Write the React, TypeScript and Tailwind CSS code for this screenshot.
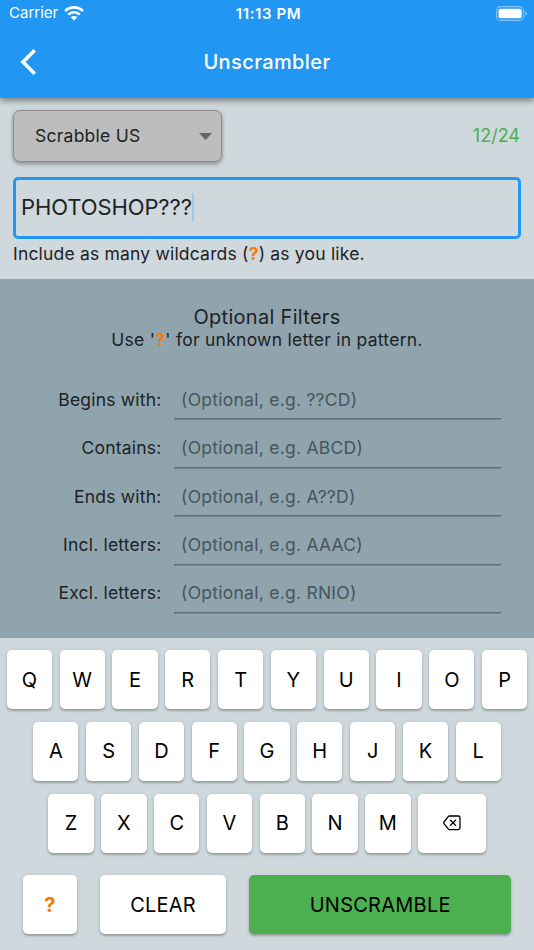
import { useState } from "react"
import type { ReactNode } from "react"
import clsx from "clsx"

const FILTERS = [
    { label: "Begins with:", hint: "(Optional, e.g. ??CD)" },
    { label: "Contains:", hint: "(Optional, e.g. ABCD)" },
    { label: "Ends with:", hint: "(Optional, e.g. A??D)" },
    { label: "Incl. letters:", hint: "(Optional, e.g. AAAC)" },
    { label: "Excl. letters:", hint: "(Optional, e.g. RNIO)" },
]

const MAX_LETTERS = 24

function Wildcard() {
    return <span className="font-bold text-[#f57c00]">?</span>
}

function WifiIcon() {
    return (
        <svg width="20" height="15" viewBox="0 0 20 15" fill="none" stroke="white" strokeWidth="2.6">
            <path d="M1.1 5C6 .2 14 .2 18.9 5" />
            <path d="M4.2 8.6C7.5 5.5 12.5 5.5 15.8 8.6" />
            <path d="M10 14.5 6.7 11.2C8.6 9.6 11.4 9.6 13.3 11.2Z" fill="white" stroke="none" />
        </svg>
    )
}

function BatteryIcon() {
    return (
        <svg width="32" height="15" viewBox="0 0 32 15" fill="none">
            <rect x=".6" y=".6" width="27" height="13.8" rx="4" stroke="white" strokeOpacity=".45" strokeWidth="1.1" />
            <rect x="2.5" y="2.8" width="23.2" height="9.4" rx="1.6" fill="white" />
            <path d="M29.4 5.2C31.4 6 31.4 9 29.4 9.8Z" fill="white" fillOpacity=".5" />
        </svg>
    )
}

function BackspaceIcon() {
    return (
        <svg width="18" height="16" viewBox="0 0 18 16" fill="none" stroke="black" strokeWidth="1.3" strokeLinecap="round" strokeLinejoin="round">
            <path d="M6.6 1H15.2Q17 1 17 2.8V12.8Q17 14.6 15.2 14.6H6.6Q5.8 14.6 5.2 13.9L1 8.6Q.5 7.8 1 7L5.2 1.7Q5.8 1 6.6 1Z" />
            <path d="M7.4 5.2 12.6 10.4M12.6 5.2 7.4 10.4" />
        </svg>
    )
}

function Key({ children, className, label, onClick }: { children: ReactNode, className?: string, label?: string, onClick: () => void }) {
    return (
        <button
            onClick={onClick}
            aria-label={label}
            className={clsx(
                "flex h-[59px] items-center justify-center rounded-[5px] text-[20px] text-black shadow-[0_2px_2px_rgba(0,0,0,0.2),0_1px_4px_rgba(0,0,0,0.12)]",
                className ?? "w-[45.3px] bg-white"
            )}
        >
            {children}
        </button>
    )
}

export default function App() {
    const [letters, setLetters] = useState("PHOTOSHOP???");

    function type(letter: string) {
        setLetters((prev) => (prev.length < MAX_LETTERS ? prev + letter : prev));
    }

    function renderKeys(row: string) {
        return row.split("").map((letter) => (
            <Key key={letter} onClick={() => type(letter)}>{letter}</Key>
        ));
    }

    return (
        <div className="flex h-[950px] w-[534px] flex-col overflow-hidden bg-[#cfd8dc] font-[Inter,sans-serif] text-[#1c2225]">
            {/* ── Header ── */}
            <header className="relative z-10 h-[98px] shrink-0 bg-[#2196f3] text-white shadow-[0_3px_6px_rgba(0,0,0,0.4)]">
                <div className="grid h-[27px] grid-cols-3 items-center pr-[6px] pl-[9px]">
                    <div className="flex items-center gap-[6px] text-[15px]">
                        <span>Carrier</span>
                        <WifiIcon />
                    </div>
                    <span className="pt-px text-center text-[15px] font-semibold tracking-[0.6px]">11:13 PM</span>
                    <div className="flex justify-end">
                        <BatteryIcon />
                    </div>
                </div>
                <div className="grid h-[70px] grid-cols-[60px_1fr_60px] items-center">
                    <button aria-label="Back" className="pl-5">
                        <svg width="17" height="26" viewBox="0 0 17 26" fill="none" stroke="white" strokeWidth="3.6">
                            <path d="M14.7 1.3 3 13 14.7 24.7" />
                        </svg>
                    </button>
                    <h1 className="text-center text-[20px] font-medium tracking-[0.4px]">Unscrambler</h1>
                </div>
            </header>

            {/* ── Letters ── */}
            <section className="flex h-[181px] shrink-0 flex-col px-[13px] pt-3">
                <div className="flex items-center justify-between">
                    <button className="flex h-[52px] w-[209px] items-center justify-between rounded-[7px] border border-[#8b8b8b] bg-[#bdbdbd] pr-[9px] pl-[21px] text-[17.5px] tracking-[0.25px] shadow-[0_2px_4px_rgba(0,0,0,0.35)]">
                        <span>Scrabble US</span>
                        <svg width="13" height="7" viewBox="0 0 13 7" fill="#666">
                            <path d="M0 0H13L6.5 7Z" />
                        </svg>
                    </button>
                    <span className="pr-px pb-[2px] text-[18px] text-[#4caf50]">{letters.length}/{MAX_LETTERS}</span>
                </div>
                <div className="mt-[15px] flex h-[62px] items-center rounded-[5px] border-3 border-[#2196f3] pb-[2px] pl-[5px] text-[22px]">
                    <span className="tracking-[-0.1px]">{letters}</span>
                    <span className="h-7 w-[2.5px] bg-[#9dcaeb]" />
                </div>
                <p className="mt-[3px] text-[17.5px] leading-6 tracking-[0.19px] whitespace-nowrap">
                    Include as many wildcards (<Wildcard />) as you like.
                </p>
            </section>

            {/* ── Filters ── */}
            <section className="h-[359px] shrink-0 bg-[#90a4ae] pt-[27px] pr-[33px]">
                <div className="-mr-[33px] text-center">
                    <h2 className="text-[20px] leading-[23px] tracking-[0.3px]">Optional Filters</h2>
                    <p className="text-[17.5px] leading-[22px] tracking-[0.26px]">Use '<Wildcard />' for unknown letter in pattern.</p>
                </div>
                <div className="mt-[20px]">
                    {FILTERS.map((filter) => (
                        <label key={filter.label} className="flex h-[48.4px] items-end">
                            <span className="w-[161.5px] pb-[8.5px] text-right text-[17.5px] leading-[22px] tracking-[0.2px]">{filter.label}</span>
                            <input
                                placeholder={filter.hint}
                                className="ml-[12.5px] min-w-0 flex-1 border-b border-[#5e6d76] bg-transparent pb-[7.5px] pl-[7px] text-[17.5px] leading-[22px] tracking-[0.26px] shadow-[0_0.5px_0_#5e6d76] outline-none placeholder:text-[#46545b]"
                            />
                        </label>
                    ))}
                </div>
            </section>

            {/* ── Keyboard ── */}
            <section className="flex flex-1 flex-col items-center pt-[12px]">
                <div className="flex gap-[7.5px]">{renderKeys("QWERTYUIOP")}</div>
                <div className="mt-[12.8px] flex gap-[7.5px]">{renderKeys("ASDFGHJKL")}</div>
                <div className="mt-[12.8px] flex gap-[7.5px]">
                    {renderKeys("ZXCVBNM")}
                    <Key className="w-[67.5px] bg-white" label="Backspace" onClick={() => setLetters(letters.slice(0, -1))}>
                        <BackspaceIcon />
                    </Key>
                </div>
                <div className="mt-[22.9px] flex gap-[23px]">
                    <Key className="w-[54px] bg-white" onClick={() => type("?")}>
                        <Wildcard />
                    </Key>
                    <Key className="w-[126.5px] bg-white tracking-[0.2px]" onClick={() => setLetters("")}>CLEAR</Key>
                    <Key className="w-[262px] bg-[#4caf50] tracking-[0.25px]" onClick={() => {}}>UNSCRAMBLE</Key>
                </div>
            </section>
        </div>
    )
}
